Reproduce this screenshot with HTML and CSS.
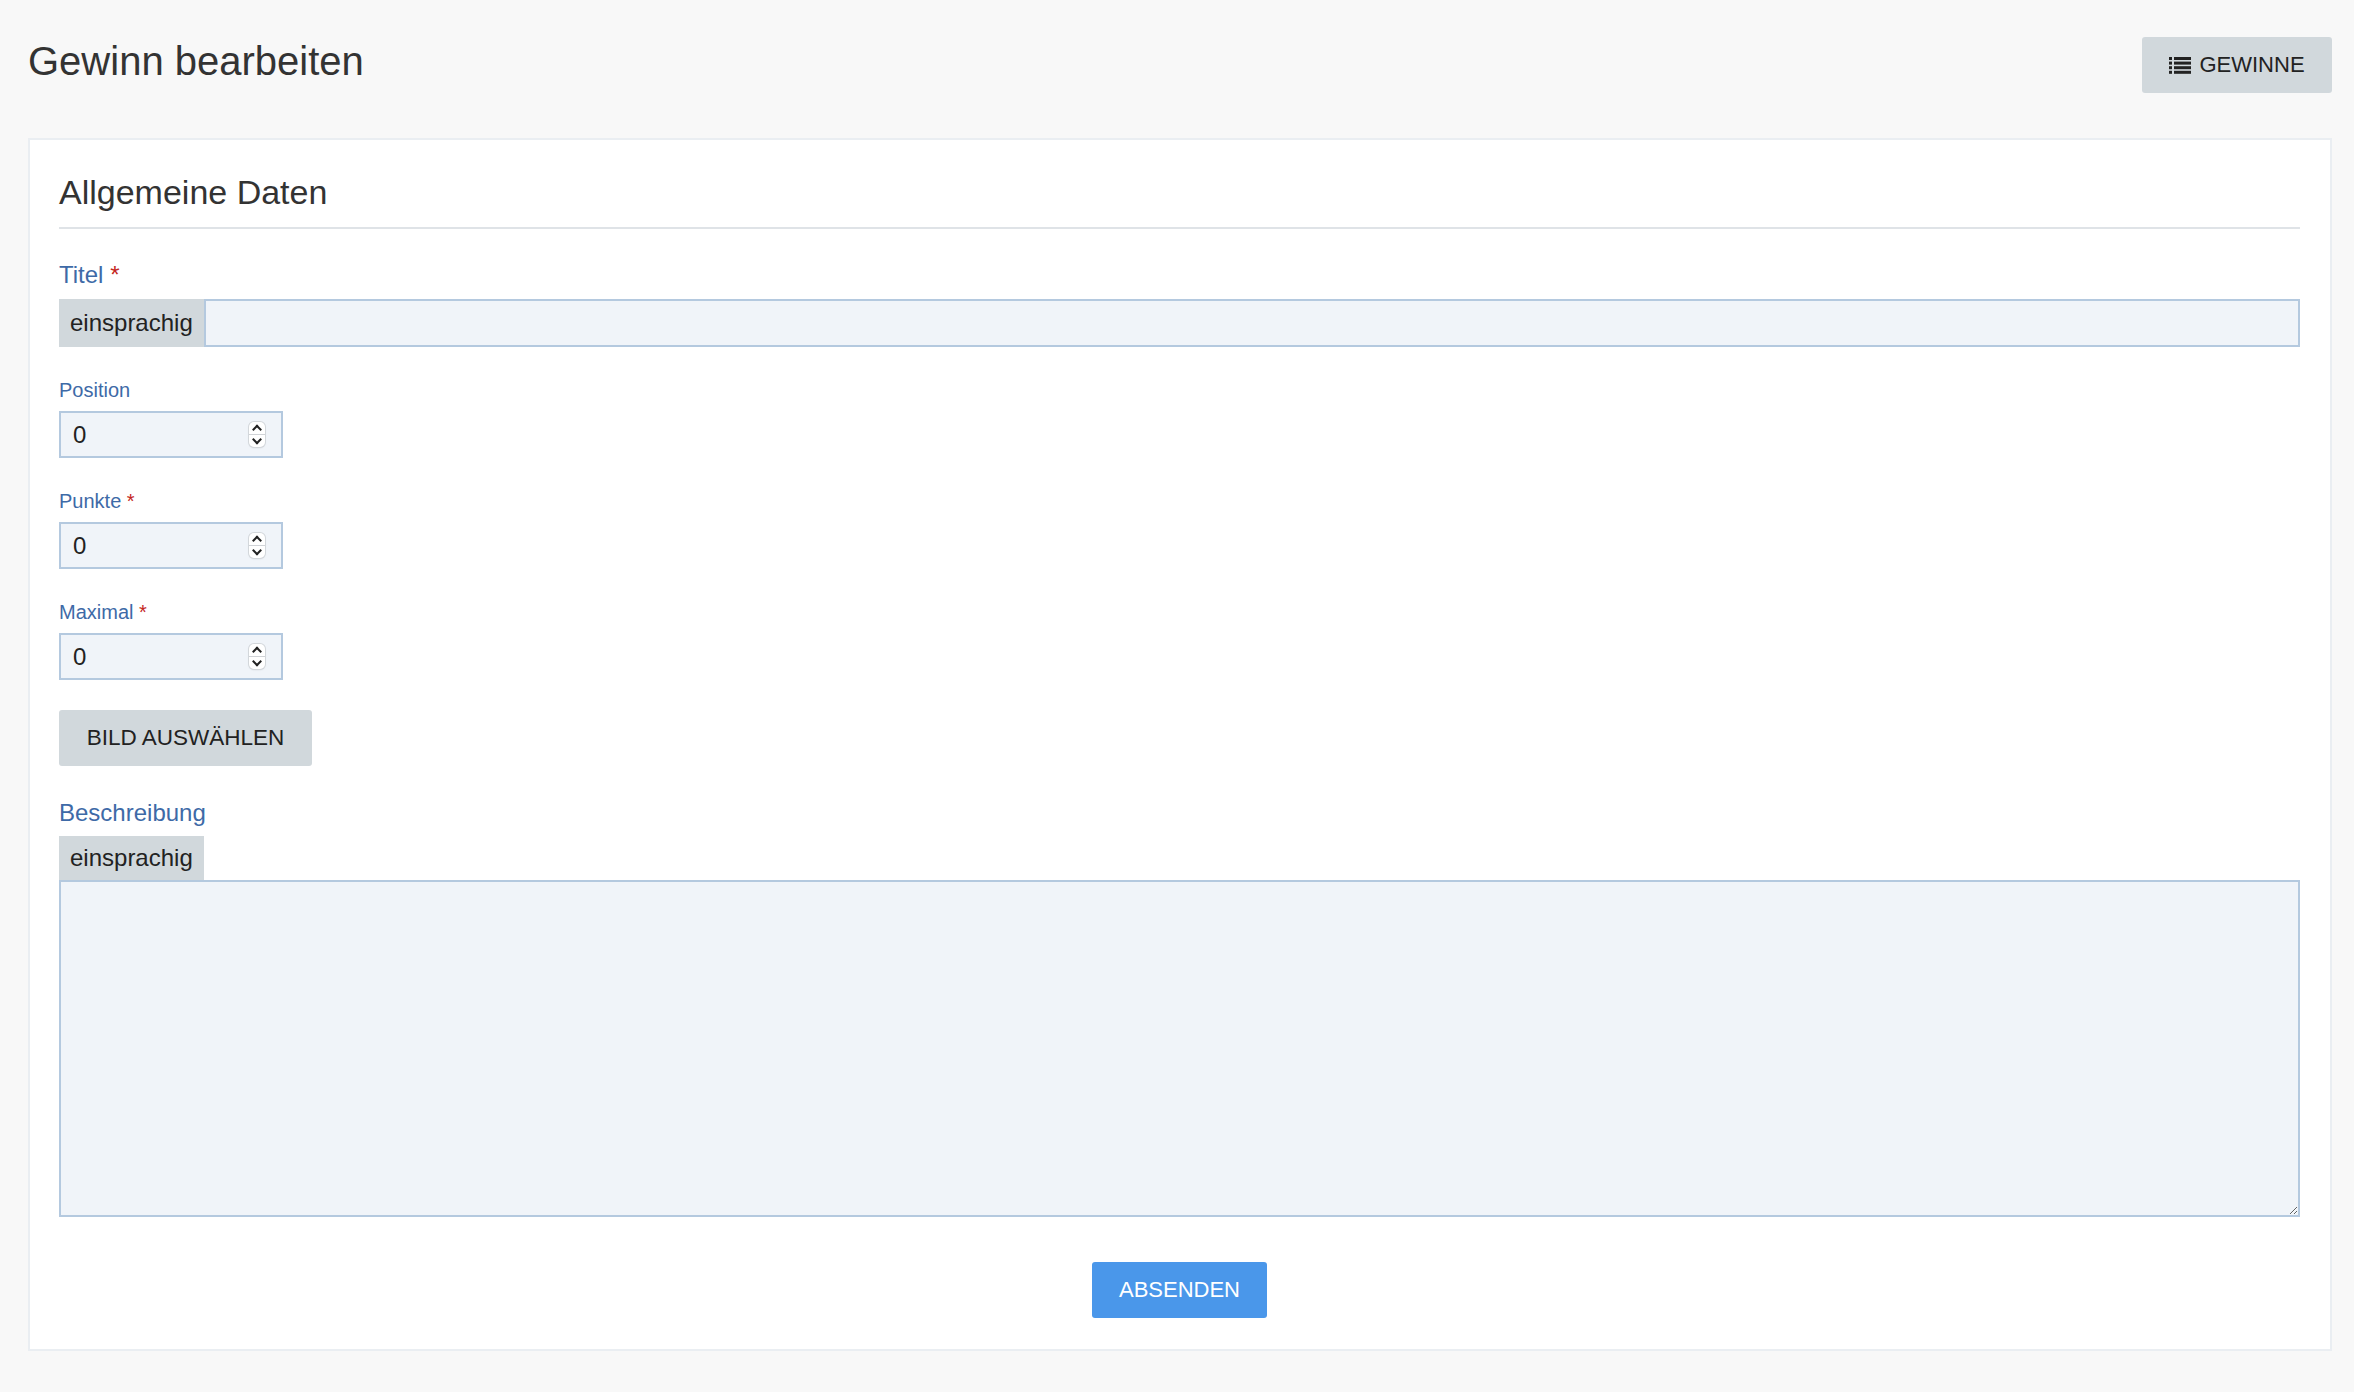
FILE: index.html
```html
<!DOCTYPE html>
<html lang="de">
<head>
<meta charset="utf-8">
<title>Gewinn bearbeiten</title>
<link rel="stylesheet" href="styles.css">
</head>
<body>
<div class="page">
  <header class="page-header">
    <h1 class="page-title">Gewinn bearbeiten</h1>
    <button class="btn btn-gray btn-list" type="button">
      <svg class="icon-list" width="22" height="17" viewBox="0 0 22 17" aria-hidden="true">
        <rect x="0" y="0" width="3" height="3"/><rect x="5" y="0" width="17" height="3"/>
        <rect x="0" y="4.6" width="3" height="3"/><rect x="5" y="4.6" width="17" height="3"/>
        <rect x="0" y="9.2" width="3" height="3"/><rect x="5" y="9.2" width="17" height="3"/>
        <rect x="0" y="13.8" width="3" height="3"/><rect x="5" y="13.8" width="17" height="3"/>
      </svg>
      GEWINNE
    </button>
  </header>

  <form class="card">
    <h2 class="section-title">Allgemeine Daten</h2>

    <div class="group group-lg">
      <label class="label label-lg">Titel <span class="req">*</span></label>
      <div class="input-group">
        <span class="addon">einsprachig</span>
        <input class="text-input" type="text">
      </div>
    </div>

    <div class="group">
      <label class="label label-sm">Position</label>
      <div class="num-field">
        <input class="num-input" type="text" value="0">
        <span class="spinner"><span class="chev up"></span><span class="chev down"></span></span>
      </div>
    </div>

    <div class="group">
      <label class="label label-sm">Punkte <span class="req">*</span></label>
      <div class="num-field">
        <input class="num-input" type="text" value="0">
        <span class="spinner"><span class="chev up"></span><span class="chev down"></span></span>
      </div>
    </div>

    <div class="group group-last">
      <label class="label label-sm">Maximal <span class="req">*</span></label>
      <div class="num-field">
        <input class="num-input" type="text" value="0">
        <span class="spinner"><span class="chev up"></span><span class="chev down"></span></span>
      </div>
    </div>

    <div class="image-row">
      <button class="btn btn-gray btn-image" type="button">BILD AUSWÄHLEN</button>
    </div>

    <div class="group group-desc">
      <label class="label label-lg">Beschreibung</label>
      <span class="tab">einsprachig</span>
      <textarea class="textarea"></textarea>
    </div>

    <div class="submit-row">
      <button class="btn btn-primary" type="submit">ABSENDEN</button>
    </div>
  </form>
</div>
</body>
</html>
```

FILE: styles.css
```css
* { box-sizing: border-box; }

html, body {
  margin: 0;
  padding: 0;
  background: #f8f8f8;
  font-family: "Liberation Sans", Arial, sans-serif;
  color: #333;
}

.page {
  padding: 37px 22px 40px 28px;
}

.page-header {
  display: flex;
  justify-content: space-between;
  align-items: flex-start;
  height: 56px;
  margin-bottom: 45px;
}

.page-title {
  margin: 0;
  font-size: 40px;
  line-height: 48px;
  font-weight: 400;
  color: #333;
}

.btn {
  font-family: "Liberation Sans", Arial, sans-serif;
  font-size: 22px;
  height: 56px;
  border: none;
  border-radius: 3px;
  cursor: pointer;
  display: inline-flex;
  align-items: center;
  justify-content: center;
}

.btn-gray {
  background: #d1d8dc;
  color: #222;
}

.btn-list {
  width: 190px;
  gap: 8px;
  padding: 0;
}

.icon-list { fill: #222; }

.card {
  display: block;
  background: #fff;
  border: 2px solid #eaeef2;
  padding: 30px 30px 31px 29px;
}

.section-title {
  margin: 2px 0 0;
  font-size: 34px;
  line-height: 40px;
  font-weight: 400;
  color: #333;
  padding-bottom: 15px;
  border-bottom: 2px solid #dfe3e7;
}

.group {
  display: flex;
  flex-direction: column;
  align-items: flex-start;
  margin-bottom: 32px;
}

.group-lg { margin-top: 32px; }
.group-last { margin-bottom: 30px; }

.label {
  color: #3e6aa7;
  margin-bottom: 10px;
}

.label-lg {
  font-size: 24px;
  line-height: 28px;
}

.label-sm {
  font-size: 20px;
  line-height: 22px;
}

.req { color: #c4261d; }

.input-group {
  display: flex;
  width: 100%;
  height: 48px;
}

.addon {
  display: flex;
  align-items: center;
  padding: 0 11px;
  background: #d1d8dc;
  font-size: 24px;
  color: #222;
  flex: none;
}

.text-input {
  flex: 1;
  height: 100%;
  border: 2px solid #b4c9df;
  background: #f0f4f9;
  outline: none;
  font-family: inherit;
  font-size: 24px;
}

.num-field {
  display: flex;
  align-items: center;
  width: 224px;
  height: 47px;
  border: 2px solid #b4c9df;
  background: #f0f4f9;
  padding: 0 16px 0 12px;
}

.num-input {
  flex: 1;
  min-width: 0;
  border: none;
  background: transparent;
  outline: none;
  padding: 0;
  font-family: inherit;
  font-size: 24px;
  color: #222;
}

.spinner {
  display: flex;
  flex-direction: column;
  width: 16px;
  height: 25px;
  background: #fff;
  border-radius: 5px;
  box-shadow: 0 0 0 1px #d3d7db, 0 1px 2px rgba(0,0,0,0.12);
  overflow: hidden;
}

.chev {
  flex: 1;
  position: relative;
}

.chev.up { border-bottom: 1px solid #d0d3d7; }

.chev::after {
  content: "";
  position: absolute;
  left: 50%;
  width: 5px;
  height: 5px;
  border-left: 2px solid #222;
  border-top: 2px solid #222;
}

.chev.up::after {
  top: 4px;
  transform: translateX(-50%) rotate(45deg);
}

.chev.down::after {
  top: 1px;
  transform: translateX(-50%) rotate(225deg);
}

.image-row {
  margin-bottom: 33px;
}

.btn-image {
  width: 253px;
  font-size: 22.5px;
}

.group-desc {
  margin-bottom: 45px;
}

.group-desc .label { margin-bottom: 9px; }

.tab {
  display: flex;
  align-items: center;
  height: 44px;
  padding: 0 11px;
  background: #d1d8dc;
  font-size: 24px;
  color: #222;
}

.textarea {
  display: block;
  width: 100%;
  height: 337px;
  border: 2px solid #b4c9df;
  background: #f0f4f9;
  outline: none;
  resize: vertical;
  font-family: inherit;
  font-size: 24px;
}

.submit-row {
  display: flex;
  justify-content: center;
}

.btn-primary {
  width: 175px;
  background: #4a97ea;
  color: #fff;
}
```
